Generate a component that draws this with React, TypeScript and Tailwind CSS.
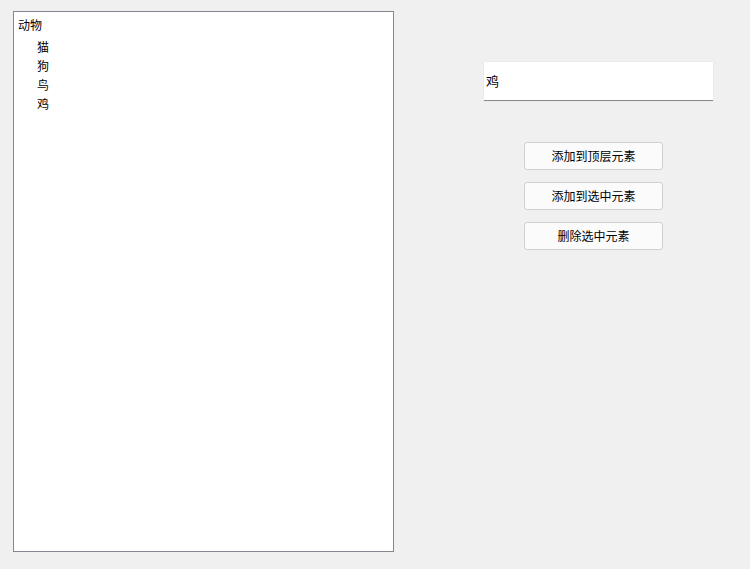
export default function App() {
  const children = ["猫", "狗", "鸟", "鸡"];
  const buttons = ["添加到顶层元素", "添加到选中元素", "删除选中元素"];
  return (
    <div
      className="w-[750px] h-[569px] bg-[#f0f0f0] flex text-[12px] text-black"
      style={{ fontFamily: '"Microsoft YaHei", "Noto Sans CJK SC", sans-serif' }}
    >
      {/* tree */}
      <div className="ml-[13px] mt-[11px] w-[381px] h-[541px] border border-[#828790] bg-white flex flex-col pt-[3px]">
        <div className="h-[19px] pl-[4px] leading-[19px]">动物</div>
        <div className="flex flex-col mt-[3px]">
          {children.map((c) => (
            <div key={c} className="h-[19px] pl-[23px] leading-[19px]">
              {c}
            </div>
          ))}
        </div>
      </div>

      {/* right side */}
      <div className="flex flex-col">
        <div className="ml-[90px] mt-[62px] w-[229px] h-[39px] bg-white border-b border-[#8a8a8a] shadow-[0_0_1px_rgba(0,0,0,0.15)] flex items-center pl-[2px] text-[13px]">
          鸡
        </div>
        <div className="ml-[130px] mt-[41px] flex flex-col gap-[12px]">
          {buttons.map((b) => (
            <button
              key={b}
              className="w-[139px] h-[28px] bg-[#fbfbfb] border border-[#d0d0d0] rounded-[3px] text-[12px] flex items-center justify-center"
            >
              {b}
            </button>
          ))}
        </div>
      </div>
    </div>
  );
}
